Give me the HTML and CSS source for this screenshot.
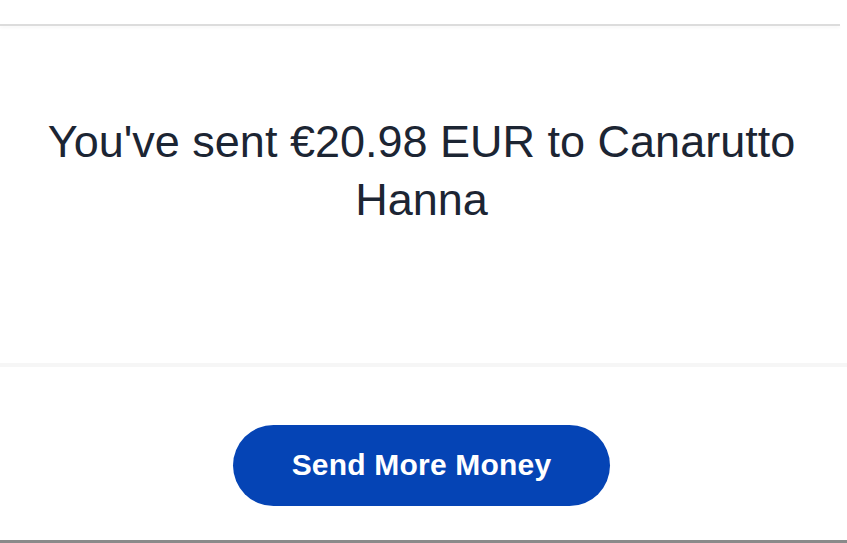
FILE: index.html
```html
<!DOCTYPE html>
<html>
<head>
<meta charset="utf-8">
<link rel="stylesheet" href="styles.css">
</head>
<body>
<div class="page">
  <div class="topbar"></div>
  <section class="message">
    <h1 class="title">You've sent €20.98 EUR to Canarutto Hanna</h1>
  </section>
  <div class="divider"></div>
  <section class="actions">
    <button class="primary">Send More Money</button>
  </section>
  <div class="bottombar"></div>
</div>
</body>
</html>
```
FILE: styles.css
```css
html, body {
  margin: 0;
  padding: 0;
  background: #ffffff;
}
.page {
  width: 847px;
  height: 543px;
  display: flex;
  flex-direction: column;
  overflow: hidden;
}
.topbar {
  margin-top: 24px;
  height: 2px;
  width: 840px;
  background: #dcdcdc;
  box-shadow: 0 2px 3px rgba(0,0,0,0.04);
}
.message {
  height: 337px;
  display: flex;
  justify-content: center;
  padding-right: 4px;
}
.title {
  margin: 87px 0 0;
  width: 800px;
  text-align: center;
  font-family: "Liberation Sans", Arial, sans-serif;
  font-weight: 400;
  font-size: 45px;
  line-height: 58px;
  color: #1c2533;
}
.divider {
  height: 4px;
  background: #f6f6f6;
}
.actions {
  flex: 1;
  display: flex;
  justify-content: center;
  padding-top: 58px;
  padding-right: 4px;
}
.primary {
  width: 377px;
  height: 81px;
  border: none;
  border-radius: 41px;
  background: #0544b5;
  color: #ffffff;
  font-family: "Liberation Sans", Arial, sans-serif;
  font-weight: 700;
  font-size: 30px;
  letter-spacing: 0.2px;
  padding-bottom: 2px;
  cursor: pointer;
}
.bottombar {
  height: 3px;
  background: #8a8a8a;
}
```
